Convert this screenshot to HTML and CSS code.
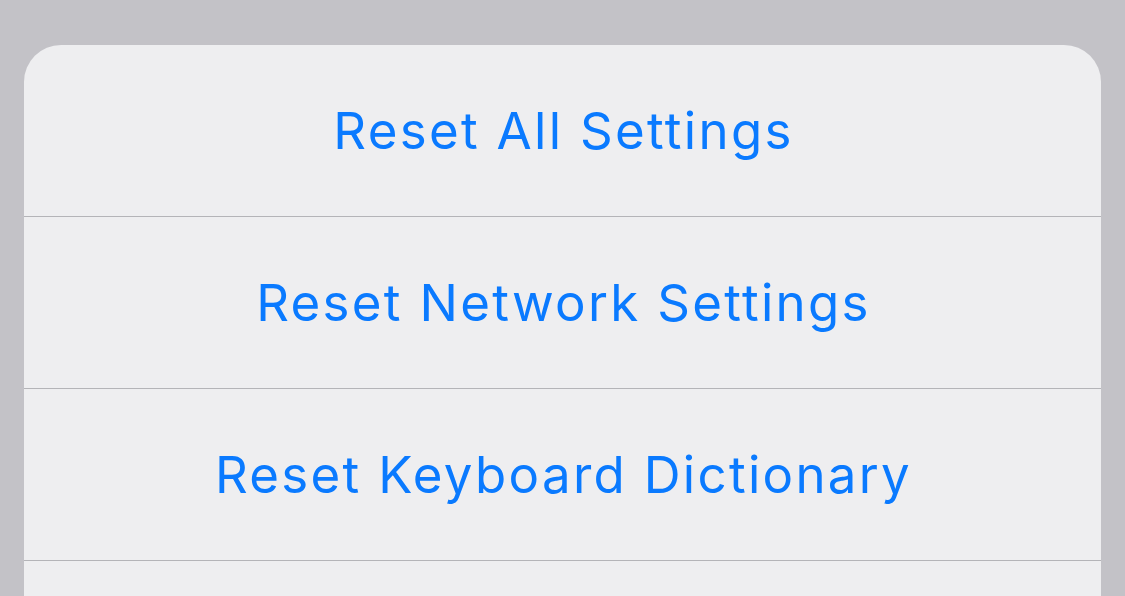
FILE: index.html
```html
<!DOCTYPE html>
<html>
<head>
<meta charset="utf-8">
<link rel="stylesheet" href="styles.css">
</head>
<body>
<div class="sheet">
  <div class="row">Reset All Settings</div>
  <div class="row">Reset Network Settings</div>
  <div class="row">Reset Keyboard Dictionary</div>
  <div class="row row-empty"></div>
</div>
</body>
</html>
```
FILE: styles.css
```css
html, body {
  margin: 0;
  padding: 0;
  background: #c3c2c7;
  overflow: hidden;
  height: 596px;
}
.sheet {
  margin: 45px 0 0 24px;
  width: 1077px;
  background: #eeeef0;
  border-radius: 37px 37px 0 0;
  overflow: hidden;
}
.row {
  height: 171px;
  border-bottom: 1px solid #b4b4b8;
  display: flex;
  align-items: center;
  justify-content: center;
  font-family: Inter, "Noto Sans", sans-serif;
  font-size: 51px;
  color: #0a7aff;
  letter-spacing: 2.3px;
  text-indent: 2px;
}
.row-empty {
  height: 40px;
  border-bottom: none;
}
```
